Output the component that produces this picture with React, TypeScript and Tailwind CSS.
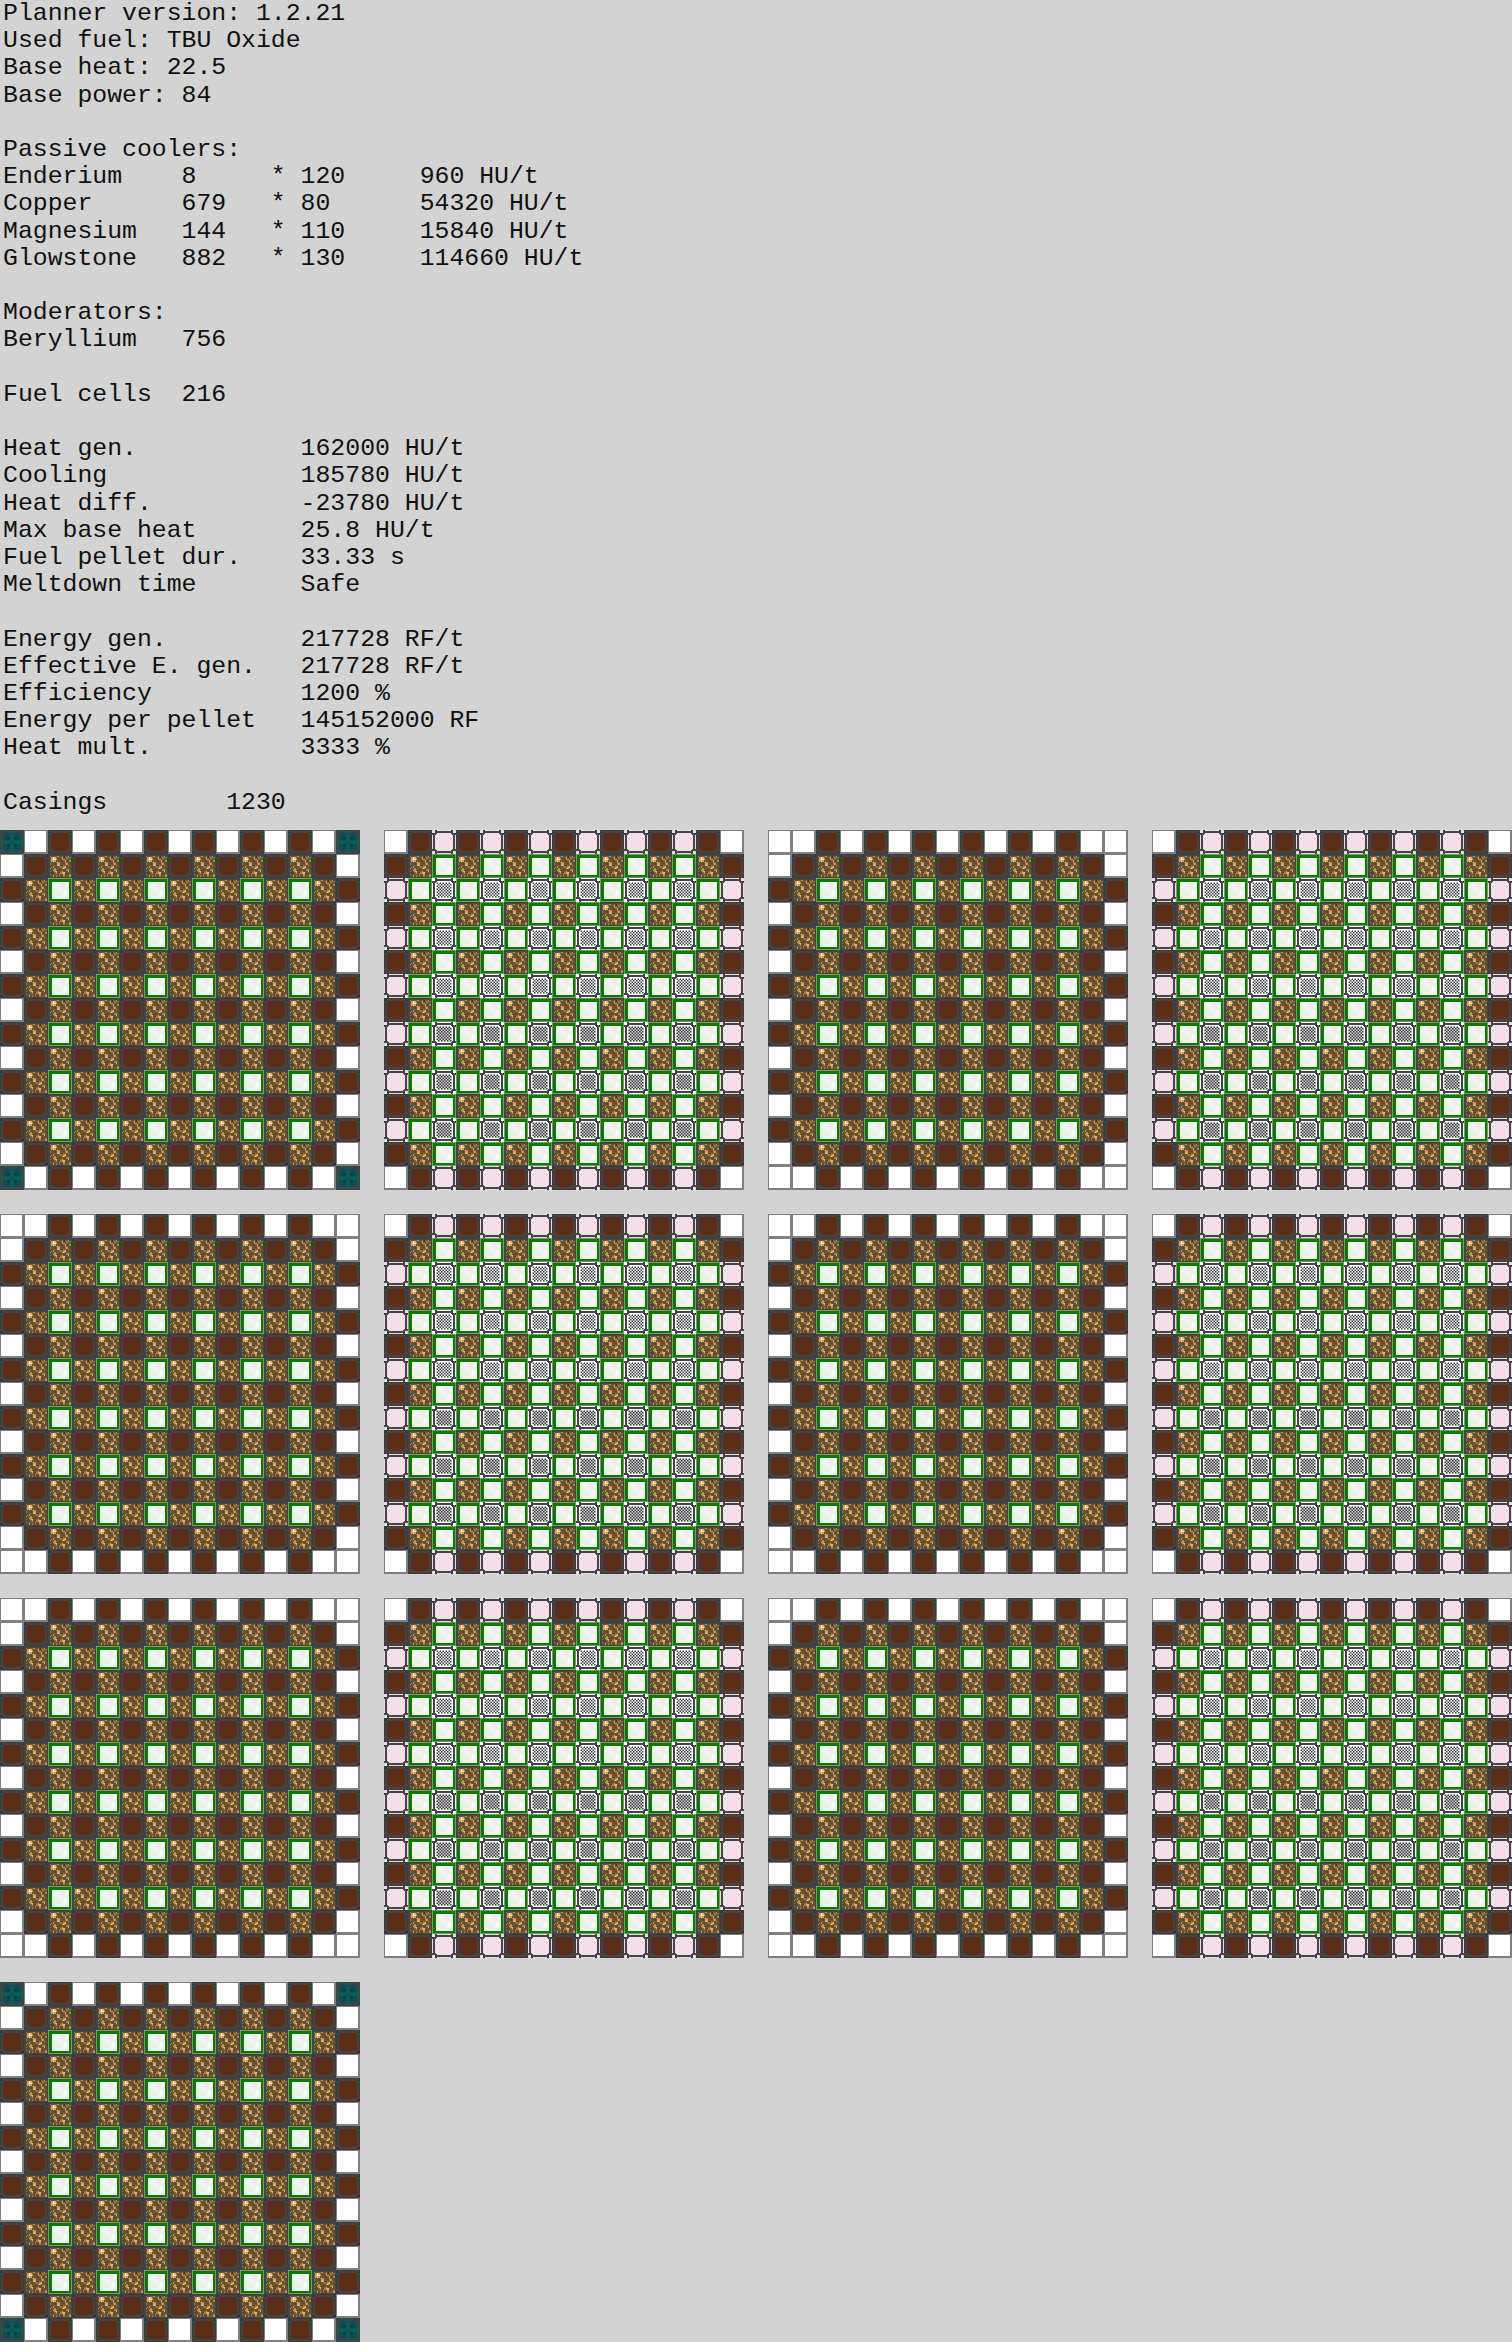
import React from "react";

const pad = (s: string, n: number) => s.padEnd(n, " ");
const cooler = (name: string, count: string, per: string, total: string) =>
  pad(name, 12) + pad(count, 6) + "* " + pad(per, 8) + total + " HU/t";
const stat = (name: string, value: string) => pad(name, 20) + value;

const lines = [
  "Planner version: 1.2.21",
  "Used fuel: TBU Oxide",
  "Base heat: 22.5",
  "Base power: 84",
  "",
  "Passive coolers:",
  cooler("Enderium", "8", "120", "960"),
  cooler("Copper", "679", "80", "54320"),
  cooler("Magnesium", "144", "110", "15840"),
  cooler("Glowstone", "882", "130", "114660"),
  "",
  "Moderators:",
  pad("Beryllium", 12) + "756",
  "",
  pad("Fuel cells", 12) + "216",
  "",
  stat("Heat gen.", "162000 HU/t"),
  stat("Cooling", "185780 HU/t"),
  stat("Heat diff.", "-23780 HU/t"),
  stat("Max base heat", "25.8 HU/t"),
  stat("Fuel pellet dur.", "33.33 s"),
  stat("Meltdown time", "Safe"),
  "",
  stat("Energy gen.", "217728 RF/t"),
  stat("Effective E. gen.", "217728 RF/t"),
  stat("Efficiency", "1200 %"),
  stat("Energy per pellet", "145152000 RF"),
  stat("Heat mult.", "3333 %"),
  "",
  pad("Casings", 15) + "1230",
];

const DARK = "#404545";

function Hash() {
  const bars: [number, number, number, number][] = [
    [3, 1, 18, 2],
    [3, 21, 18, 2],
    [1, 3, 2, 18],
    [21, 3, 2, 18],
    [3, 0, 2, 4],
    [19, 0, 2, 4],
    [3, 20, 2, 4],
    [19, 20, 2, 4],
    [0, 3, 4, 2],
    [0, 19, 4, 2],
    [20, 3, 4, 2],
    [20, 19, 4, 2],
  ];
  return (
    <g fill={DARK} shapeRendering="crispEdges">
      {bars.map(([x, y, w, h], i) => (
        <rect key={i} x={x} y={y} width={w} height={h} />
      ))}
    </g>
  );
}

const GLOW = [
  "gggggggggggggggg",
  "gcaabadaacgbadag",
  "gadfecaabdaacabg",
  "gaeffdbaacdabaag",
  "gbdedaabagbdaacg",
  "gaabacdabaadbagg",
  "gcabgadeabacdaag",
  "gaagbaedagbaacbg",
  "gabdaaabcadeabag",
  "gdaacgbaadebagag",
  "gaacdbagabaacdag",
  "gbaadeaabdagaeag",
  "gagabdaacdeaabag",
  "gcabagadabdagacg",
  "gaadacabaacabadg",
  "gggggggggggggggg",
];
const GLOW_COLORS: Record<string, string> = {
  g: DARK,
  a: "#624e2e",
  b: "#7d6036",
  c: "#a67e3f",
  d: "#cc9c54",
  e: "#e8b970",
  f: "#fff1cf",
};

function Defs() {
  const checker: React.ReactNode[] = [];
  for (let y = 0; y < 10; y++) {
    for (let x = 0; x < 10; x++) {
      if ((x + y) % 2 === 0) {
        checker.push(<rect key={`${x}-${y}`} x={3 + x} y={3 + y} width={1} height={1} />);
      }
    }
  }
  return (
    <svg className="absolute w-0 h-0" aria-hidden="true">
      <defs>
        <symbol id="casing" viewBox="0 0 24 24">
          <rect width="24" height="24" fill="#808080" />
          <rect x="1" y="1" width="21" height="21" fill="#ffffff" />
        </symbol>
        <symbol id="brown" viewBox="0 0 24 24">
          <rect width="24" height="24" fill="#3f3a36" />
          <rect x="3" y="3" width="18" height="18" fill="#5c2d17" />
          <Hash />
        </symbol>
        <symbol id="pink" viewBox="0 0 24 24">
          <rect width="24" height="24" fill="#f1d6e5" />
          <rect x="3" y="3" width="18" height="18" fill="#f4dfea" />
          <Hash />
        </symbol>
        <symbol id="teal" viewBox="0 0 24 24">
          <rect width="24" height="24" fill="#2c4a4c" />
          <rect x="3" y="3" width="18" height="18" fill="#0b4f55" />
          <rect x="7" y="7" width="10" height="10" fill="#0a3f46" />
          <rect x="10" y="3" width="4" height="18" fill="#0d5a5c" />
          <rect x="3" y="10" width="18" height="4" fill="#0d5a5c" />
          <Hash />
        </symbol>
        <symbol id="cooler" viewBox="0 0 24 24">
          <g shapeRendering="crispEdges">
            <rect width="24" height="24" fill="#7a9a62" />
            <rect x="1" y="1" width="22" height="22" fill="#087c08" />
            <rect x="4" y="4" width="17" height="17" fill="#eff3e9" />
            <rect x="6" y="7" width="4" height="3" fill="#f6f9f3" />
            <rect x="13" y="5" width="3" height="4" fill="#e7ecdf" />
            <rect x="15" y="13" width="4" height="4" fill="#f7faf5" />
            <rect x="7" y="15" width="5" height="3" fill="#e8eee1" />
            <rect x="11" y="10" width="3" height="3" fill="#f3f6ee" />
          </g>
        </symbol>
        <symbol id="glow" viewBox="0 0 16 16">
          <g shapeRendering="crispEdges">
            {GLOW.flatMap((row, y) =>
              row.split("").map((c, x) => (
                <rect key={`${x}-${y}`} x={x} y={y} width="1" height="1" fill={GLOW_COLORS[c]} />
              ))
            )}
          </g>
        </symbol>
        <symbol id="fuel" viewBox="0 0 24 24">
          <rect width="24" height="24" fill="#ffffff" />
          <Hash />
          <svg x="0" y="0" width="24" height="24" viewBox="0 0 16 16">
            <g fill="#404040">{checker}</g>
          </svg>
        </symbol>
        <symbol id="fuelDark" viewBox="0 0 24 24">
          <rect width="24" height="24" fill="#ffffff" />
          <Hash />
          <rect x="4.5" y="4.5" width="15" height="15" fill="#d8d8d8" />
          <svg x="0" y="0" width="24" height="24" viewBox="0 0 16 16">
            <g fill="#383838">{checker}</g>
          </svg>
        </symbol>
      </defs>
    </svg>
  );
}

function casingLayerTile(r: number, c: number, teal: boolean): string {
  const rEdge = r === 0 || r === 14;
  const cEdge = c === 0 || c === 14;
  if (rEdge && cEdge) return teal ? "teal" : "casing";
  if (rEdge) return c % 2 === 1 ? "casing" : "brown";
  if (cEdge) return r % 2 === 1 ? "casing" : "brown";
  if (r % 2 === 1) return c % 2 === 1 ? "brown" : "glow";
  return c % 2 === 1 ? "glow" : "cooler";
}

function fuelLayerTile(r: number, c: number): string {
  const rEdge = r === 0 || r === 14;
  const cEdge = c === 0 || c === 14;
  if (rEdge && cEdge) return "casing";
  if (rEdge) return c % 2 === 1 ? "brown" : "pink";
  if (cEdge) return r % 2 === 1 ? "brown" : "pink";
  if (r % 2 === 1) return c % 2 === 1 ? "glow" : "cooler";
  if (c % 2 === 1) return "cooler";
  return r >= 8 ? "fuelDark" : "fuel";
}

function Layer({ index }: { index: number }) {
  const isFuel = index % 2 === 1;
  const teal = index === 0 || index === 12;
  const tiles: string[] = [];
  for (let r = 0; r < 15; r++) {
    for (let c = 0; c < 15; c++) {
      tiles.push(isFuel ? fuelLayerTile(r, c) : casingLayerTile(r, c, teal));
    }
  }
  return (
    <div className="grid grid-cols-[repeat(15,24px)] grid-rows-[repeat(15,24px)] w-[360px] h-[360px]">
      {tiles.map((t, i) => (
        <svg key={i} className="block w-6 h-6" width="24" height="24">
          <use href={`#${t}`} width="24" height="24" />
        </svg>
      ))}
    </div>
  );
}

export default function App() {
  return (
    <div className="w-[1512px] h-[2342px] bg-[#d3d3d3] overflow-hidden">
      <Defs />
      <pre className="h-[830px] pl-[3px] m-0 text-[24.8px] leading-[27.2px] text-[#111111] font-['Liberation_Mono','Courier_New',monospace] whitespace-pre">
        {lines.join("\n")}
      </pre>
      <div className="flex flex-wrap gap-6">
        {Array.from({ length: 13 }, (_, i) => (
          <Layer key={i} index={i} />
        ))}
      </div>
    </div>
  );
}
